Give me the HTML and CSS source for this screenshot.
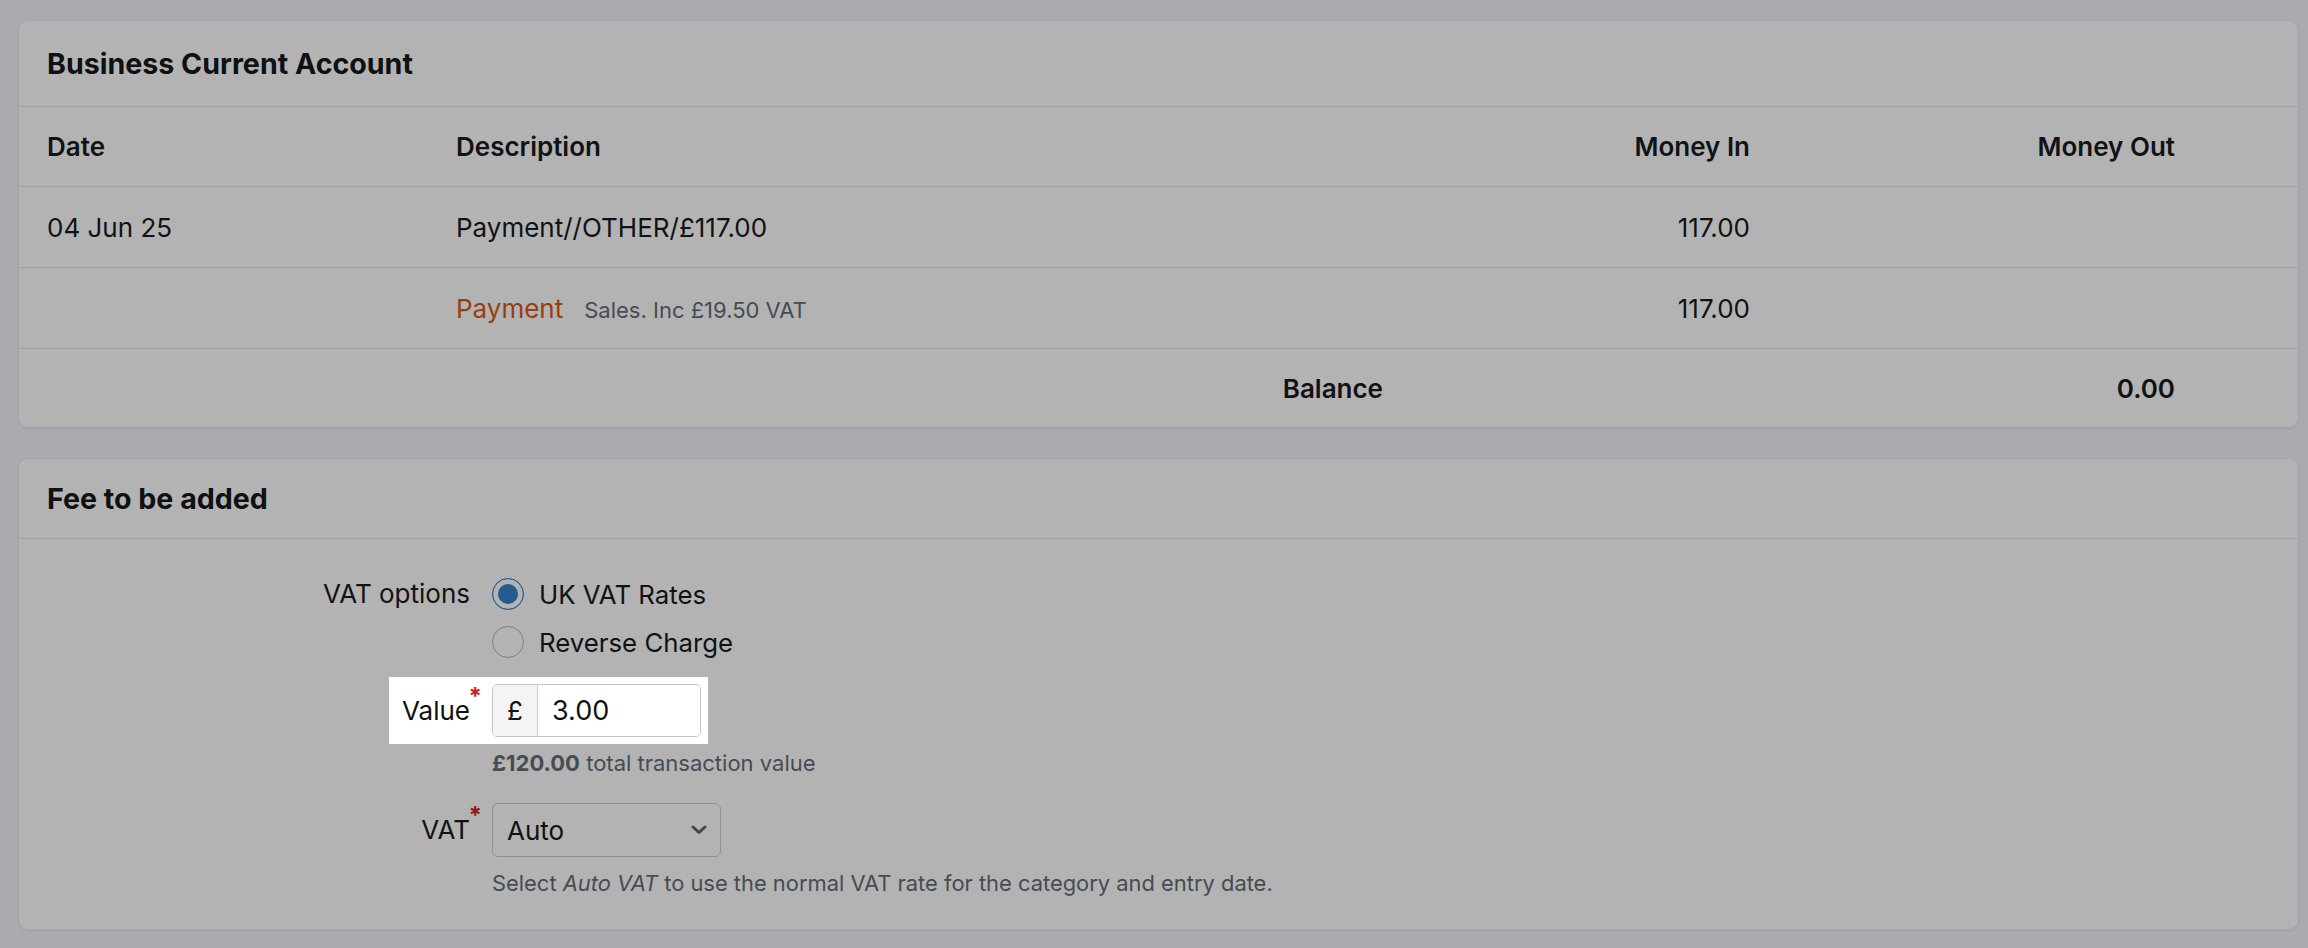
FILE: index.html
```html
<!DOCTYPE html>
<html lang="en">
<head>
<meta charset="utf-8">
<title>Business Current Account</title>
<link rel="stylesheet" href="styles.css">
</head>
<body>
<main class="page">
  <section class="card">
    <header class="card-head card-head--tall"><h2>Business Current Account</h2></header>
    <div class="tbl">
      <div class="row row--head">
        <div class="c c-first">Date</div>
        <div class="c">Description</div>
        <div class="c num">Money In</div>
        <div class="c num">Money Out</div>
        <div class="c"></div>
      </div>
      <div class="row">
        <div class="c c-first">04 Jun 25</div>
        <div class="c">Payment//OTHER/£117.00</div>
        <div class="c num">117.00</div>
        <div class="c num"></div>
        <div class="c"></div>
      </div>
      <div class="row">
        <div class="c c-first"></div>
        <div class="c desc"><span class="cat">Payment</span><span class="note">Sales. Inc £19.50 VAT</span></div>
        <div class="c num">117.00</div>
        <div class="c num"></div>
        <div class="c"></div>
      </div>
      <div class="row row--total">
        <div class="c c-first"></div>
        <div class="c num strong">Balance</div>
        <div class="c"></div>
        <div class="c num strong">0.00</div>
        <div class="c"></div>
      </div>
    </div>
  </section>

  <section class="card">
    <header class="card-head"><h2>Fee to be added</h2></header>
    <div class="form">
      <div class="frow">
        <div class="flabel flabel--top">VAT options</div>
        <div class="radios">
          <label class="radio"><input type="radio" name="vatopt" checked><span>UK VAT Rates</span></label>
          <label class="radio"><input type="radio" name="vatopt"><span>Reverse Charge</span></label>
        </div>
      </div>

      <div class="spot">
        <label class="flabel req" for="value">Value</label>
        <div class="igroup">
          <span class="addon">£</span>
          <input id="value" class="ifield" type="text" value="3.00">
        </div>
      </div>

      <p class="hint hint--total"><strong>£120.00</strong> total transaction value</p>

      <div class="frow frow--vat">
        <label class="flabel req req--dim" for="vat">VAT</label>
        <div class="selwrap">
          <select id="vat" class="sel"><option>Auto</option></select>
          <svg class="chev" width="18" height="10" viewBox="0 0 18 10" aria-hidden="true"><path d="M3 2l6 5.5 6-5.5" fill="none" stroke="#44484e" stroke-width="3" stroke-linecap="round" stroke-linejoin="round"/></svg>
        </div>
      </div>

      <p class="hint hint--help">Select <em>Auto VAT</em> to use the normal VAT rate for the category and entry date.</p>
    </div>
  </section>
</main>
</body>
</html>
```
FILE: styles.css
```css
* { box-sizing: border-box; }
html, body { margin: 0; padding: 0; }
body {
  background: #a9abb0;
  font-family: Inter, "Liberation Sans", sans-serif;
  color: #111213;
  font-size: 26px;
}
.page {
  padding: 20px 9px 19px 18px;
  display: flex;
  flex-direction: column;
  gap: 30px;
}
.card {
  background: #b3b3b3;
  border: 1px solid #a4a5a8;
  border-radius: 10px;
  box-shadow: 0 1px 2px rgba(0,0,0,0.05);
}
.card-head {
  height: 80px;
  padding: 0 28px;
  display: flex;
  align-items: center;
  border-bottom: 1px solid #a2a2a2;
}
.card-head--tall { height: 86px; }
.card-head h2 {
  margin: 0;
  font-size: 28.6px;
  font-weight: 700;
  color: #0f1011;
}

/* table */
.row {
  display: grid;
  grid-template-columns: 437px 927px 367px 425px 1fr;
  height: 81px;
  align-items: center;
  border-bottom: 1px solid #a2a2a2;
}
.row--head { height: 80px; }
.row:last-child { border-bottom: 0; height: 78px; }
.row--head .c { font-weight: 600; }
.c { white-space: nowrap; }
.c-first { padding-left: 28px; }
.num { text-align: right; }
.strong { font-weight: 600; }
.desc { display: flex; align-items: baseline; gap: 21px; }
.cat { color: #963f10; }
.note { color: #464c54; font-size: 22px; }

/* form */
.form { padding: 31px 0 29px; }
.frow {
  display: grid;
  grid-template-columns: 451px auto;
  column-gap: 22px;
  align-items: start;
}
.flabel {
  text-align: right;
  line-height: 48px;
  position: relative;
}
.req::after {
  content: "*";
  position: absolute;
  right: -12px;
  top: -14px;
  color: #c4221d;
  font-size: 24px;
  font-weight: 700;
}
.req--dim::after { color: #8e1b17; }

.radios { display: flex; flex-direction: column; font-size: 25.8px; }
.radio {
  display: flex;
  align-items: center;
  gap: 15px;
  height: 48px;
}
.radio input {
  appearance: none;
  -webkit-appearance: none;
  margin: 0;
  width: 32px;
  height: 32px;
  border-radius: 50%;
  border: 1.5px solid #7f8083;
  background: #b3b3b3;
}
.radio input:checked {
  border-color: #2a5b8d;
  background: #245a8e;
  box-shadow: inset 0 0 0 5px #b3b3b3;
}

.spot {
  margin: 11px 0 0 370px;
  width: 319px;
  padding: 7px;
  background: #ffffff;
  display: flex;
  align-items: center;
  gap: 22px;
}
.spot .flabel { flex: 1; line-height: 53px; color: #111; }
.igroup {
  display: flex;
  width: 209px;
  height: 53px;
  border: 1px solid #c2c6cc;
  border-radius: 5px;
  overflow: hidden;
}
.addon {
  width: 45px;
  background: #f3f4f6;
  border-right: 1px solid #c9ccd1;
  display: flex;
  align-items: center;
  justify-content: center;
  font-size: 26px;
  color: #111;
}
.ifield {
  flex: 1;
  min-width: 0;
  border: 0;
  outline: 0;
  padding: 0 0 0 14px;
  font: inherit;
  font-size: 27px;
  color: #111;
  background: #fff;
}

.hint {
  margin: 0 0 0 473px;
  color: #464c54;
  font-size: 22px;
  line-height: 33px;
}
.hint strong { font-weight: 700; }
.hint--total { margin-top: 3px; }
.hint--help { margin-top: 10px; font-size: 21.9px; }

.frow--vat { margin-top: 23px; align-items: center; }
.frow--vat .flabel { line-height: 54px; }
.selwrap { position: relative; width: 229px; }
.sel {
  appearance: none;
  -webkit-appearance: none;
  width: 229px;
  height: 54px;
  border: 1px solid #8e8f92;
  border-radius: 6px;
  background: #b3b3b3;
  font: inherit;
  font-size: 26px;
  color: #111;
  padding: 0 0 0 14px;
}
.chev {
  position: absolute;
  right: 13px;
  top: 22px;
  pointer-events: none;
}
```
